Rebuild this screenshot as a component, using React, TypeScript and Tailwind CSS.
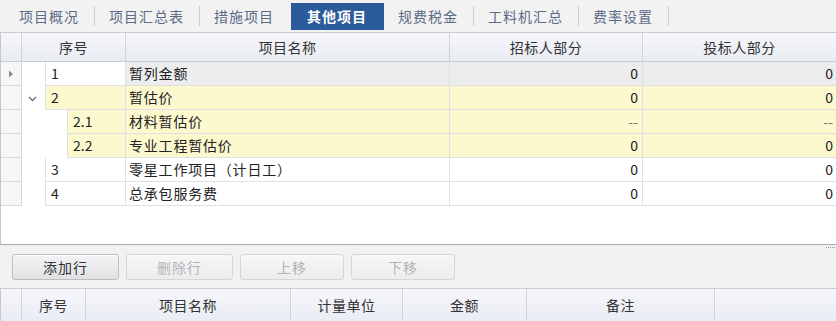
import React from "react";

const tabs = ["项目概况", "项目汇总表", "措施项目", "其他项目", "规费税金", "工料机汇总", "费率设置"];
const ACTIVE = 3;

type Row = {
  no: string;
  name: string;
  a: string;
  b: string;
  level: 1 | 2;
  bg: "sel" | "yellow" | "white";
  chevron?: boolean;
  current?: boolean;
};

const rows: Row[] = [
  { no: "1", name: "暂列金额", a: "0", b: "0", level: 1, bg: "sel", current: true },
  { no: "2", name: "暂估价", a: "0", b: "0", level: 1, bg: "yellow", chevron: true },
  { no: "2.1", name: "材料暂估价", a: "--", b: "--", level: 2, bg: "yellow" },
  { no: "2.2", name: "专业工程暂估价", a: "0", b: "0", level: 2, bg: "yellow" },
  { no: "3", name: "零星工作项目（计日工）", a: "0", b: "0", level: 1, bg: "white" },
  { no: "4", name: "总承包服务费", a: "0", b: "0", level: 1, bg: "white" },
];

function bgOf(r: Row) {
  if (r.bg === "sel") return "bg-[#ededee]";
  if (r.bg === "yellow") return "bg-[#fdf9cf]";
  return "bg-white";
}

export default function App() {
  return (
    <div className="w-[836px] h-[321px] overflow-hidden bg-[#f1f1f1] font-['Noto_Sans_CJK_SC','Noto_Sans',sans-serif] text-[14px] text-[#222]">
      {/* tab bar */}
      <div className="h-[32px] flex items-center pl-[5px] bg-[#f2f2f3] tracking-[1px]">
        {tabs.map((t, i) => {
          const active = i === ACTIVE;
          const showSep = i !== ACTIVE && i + 1 !== ACTIVE;
          return (
            <React.Fragment key={t}>
              {active ? (
                <div className="h-[27px] mt-[1px] ml-[2px] pl-[16px] pr-[17px] flex items-center bg-[#2c5b9c] text-white font-bold text-[14px]">
                  {t}
                </div>
              ) : (
                <div className="h-[27px] pl-[14px] pr-[15px] flex items-center text-[#5b6a85]">{t}</div>
              )}
              {showSep && <div className="w-px h-[20px] bg-[#cfcfd3]" />}
            </React.Fragment>
          );
        })}
      </div>

      {/* main grid */}
      <div className="h-[213px] bg-white border-l border-[#c8c8cc] border-b border-b-[#a9a9ad] flex flex-col">
        {/* header */}
        <div className="h-[30px] flex border-y border-[#c9ccd4] bg-gradient-to-b from-[#f6f7fb] to-[#e9ecf3] text-[#333] tracking-[0.5px]">
          <div className="w-[21px] border-r border-[#cfd2da]" />
          <div className="w-[104px] border-r border-[#cfd2da] flex items-center justify-center">序号</div>
          <div className="w-[324px] border-r border-[#cfd2da] flex items-center justify-center">项目名称</div>
          <div className="w-[193px] border-r border-[#cfd2da] flex items-center justify-center">招标人部分</div>
          <div className="flex-1 flex items-center justify-center">投标人部分</div>
        </div>
        {rows.map((r) => (
          <div key={r.no} className="h-[24px] flex">
            <div className="w-[21px] border-r border-b border-[#d9d9dc] bg-[#f7f7f8] flex items-center justify-center">
              {r.current && (
                <svg width="6" height="8" viewBox="0 0 6 8">
                  <path d="M1 0.5 L5 4 L1 7.5 Z" fill="#8a8a8e" />
                </svg>
              )}
            </div>
            <div className="w-[104px] flex">
              <div
                className={`${r.level === 1 ? "w-[23px]" : "w-[45px]"} bg-white flex items-center justify-center`}
              >
                {r.chevron && (
                  <svg width="9" height="6" viewBox="0 0 9 6" className="ml-[-2px] mt-[1px]">
                    <path d="M1 1 L4.5 4.5 L8 1" fill="none" stroke="#707074" strokeWidth="1.3" />
                  </svg>
                )}
              </div>
              <div
                className={`flex-1 border-l border-b border-r border-[#e0e0e3] flex items-center pl-[5px] ${
                  r.bg === "sel" ? "bg-white" : bgOf(r)
                }`}
              >
                {r.no}
              </div>
            </div>
            <div
              className={`w-[324px] border-r border-b border-[#e0e0e3] flex items-center pl-[3px] tracking-[0.8px] ${bgOf(r)}`}
            >
              {r.name}
            </div>
            <div
              className={`w-[193px] border-r border-b border-[#e0e0e3] flex items-center justify-end pr-[4px] ${bgOf(r)} ${
                r.a === "--" ? "text-[#777]" : ""
              }`}
            >
              {r.a}
            </div>
            <div
              className={`flex-1 border-b border-[#e0e0e3] flex items-center justify-end pr-[3px] ${bgOf(r)} ${
                r.b === "--" ? "text-[#777]" : ""
              }`}
            >
              {r.b}
            </div>
          </div>
        ))}
        <div className="flex-1" />
      </div>

      {/* toolbar */}
      <div className="relative h-[43px] flex items-center gap-[7px] pl-[12px] pt-[1px] tracking-[1px]">
        <div className="absolute right-[1px] top-[2px] w-[9px] border-t border-dotted border-[#9a9a9a]" />
        <button className="w-[107px] h-[26px] rounded-[3px] border border-[#bdbdc1] bg-gradient-to-b from-[#f4f4f6] to-[#e1e1e4] text-[#333] shadow-[inset_0_1px_0_#ffffff]">
          添加行
        </button>
        <button className="w-[107px] h-[26px] rounded-[3px] border border-[#d6d6d9] bg-gradient-to-b from-[#f7f7f8] to-[#ececee] text-[#b3b3b6]">
          删除行
        </button>
        <button className="w-[104px] h-[26px] rounded-[3px] border border-[#d6d6d9] bg-gradient-to-b from-[#f7f7f8] to-[#ececee] text-[#b3b3b6]">
          上移
        </button>
        <button className="w-[104px] h-[26px] rounded-[3px] border border-[#d6d6d9] bg-gradient-to-b from-[#f7f7f8] to-[#ececee] text-[#b3b3b6]">
          下移
        </button>
      </div>

      {/* bottom header */}
      <div className="h-[33px] flex border-t border-[#c9ccd4] border-l border-l-[#c8c8cc] bg-gradient-to-b from-[#f6f7fb] to-[#e9ecf3] text-[#333] tracking-[0.5px]">
        <div className="w-[21px] border-r border-[#cfd2da]" />
        <div className="w-[64px] border-r border-[#cfd2da] flex items-center justify-center">序号</div>
        <div className="w-[205px] border-r border-[#cfd2da] flex items-center justify-center">项目名称</div>
        <div className="w-[112px] border-r border-[#cfd2da] flex items-center justify-center">计量单位</div>
        <div className="w-[124px] border-r border-[#cfd2da] flex items-center justify-center">金额</div>
        <div className="w-[188px] border-r border-[#cfd2da] flex items-center justify-center">备注</div>
        <div className="flex-1" />
      </div>
    </div>
  );
}
